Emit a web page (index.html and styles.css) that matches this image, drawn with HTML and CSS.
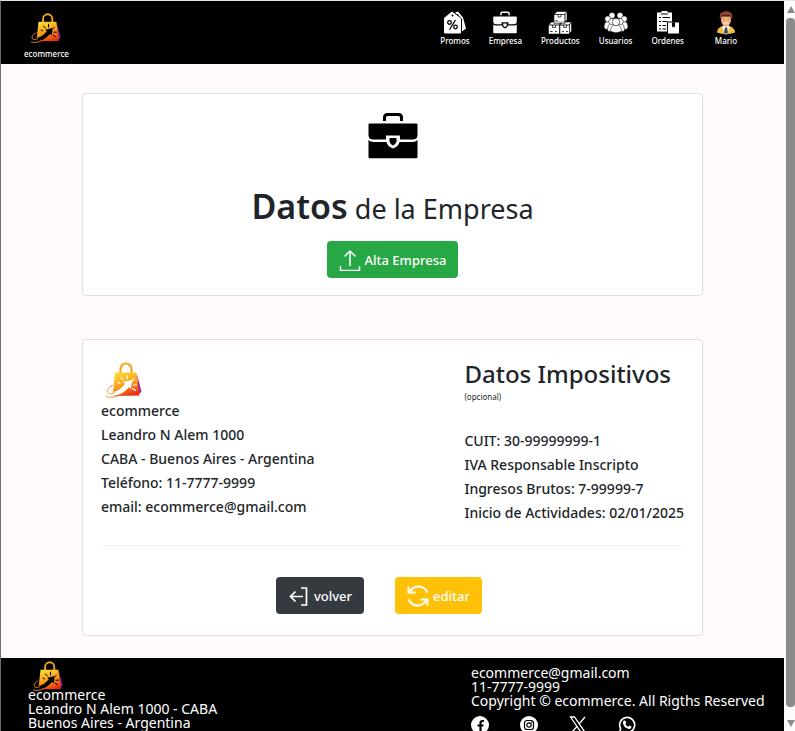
FILE: index.html
```html
<!DOCTYPE html>
<html lang="es">
<head>
<meta charset="utf-8">
<meta name="viewport" content="width=device-width, initial-scale=1">
<title>ecommerce - Empresa</title>
<link rel="stylesheet" href="styles.css">
</head>
<body>
<svg class="defs" aria-hidden="true">
  <defs>
    <linearGradient id="bag-fill" x1="0.3" y1="0" x2="0.7" y2="1">
      <stop offset="0" stop-color="#fdd835"/>
      <stop offset="0.5" stop-color="#f9a01b"/>
      <stop offset="1" stop-color="#e62a10"/>
    </linearGradient>
    <linearGradient id="swoosh-fill" x1="0" y1="1" x2="1" y2="0">
      <stop offset="0" stop-color="#f9b233"/>
      <stop offset="1" stop-color="#e8431a"/>
    </linearGradient>
    <symbol id="bag" viewBox="0 0 38 36">
      <path d="M32 12l4.500 18-3 2z" fill="#a3238e"/>
      <path d="M15.500 12V7a5.500 5.500 0 0 1 11 0v5" fill="none" stroke="#f3a61f" stroke-width="2.200"/>
      <path d="M10 10.500h21.500L34.500 33.500 7.500 34z" fill="url(#bag-fill)"/>
      <path d="M3 33c9 3 17-3 21-8l2 2 1-9-9 2 2 2c-4 5-9 8-13 8-3 0-3-3-1-6-5 3-7 7-3 9z" fill="currentColor"/>
      <path d="M7.500 23.500c-5 2-6.500 6.500-4 8 2 1 4 0 6-1" fill="none" stroke="url(#swoosh-fill)" stroke-width="1"/>
      <path d="M1 34.500c4 1.500 9 1 13-1.500" fill="none" stroke="url(#swoosh-fill)" stroke-width="1"/>
      <path d="M22 13.500v3.500M16 15.500l2 2.500M29 17l-2.500 2.500M28.500 23h3M27.500 26.500l3 2M15 21.500l-2-1" stroke="currentColor" stroke-width="1.200" stroke-linecap="round"/>
    </symbol>
    <symbol id="briefcase" viewBox="0 0 50 46">
      <path d="M16.500 8V4.500q0-3 3-3h11q3 0 3 3V8" fill="none" stroke="currentColor" stroke-width="3"/>
      <path d="M1.500 10.500h47a1 1 0 0 1 1 1V22q0 4.500-5 4.500H32V22.500H18v4H5.500q-5 0-5-4.500V11.500a1 1 0 0 1 1-1z" fill="currentColor"/>
      <path d="M.500 27q2 2 5 2H18.500q1 4.500 6.500 6.500 5.500-2 6.500-6.500h13q3 0 5-2V44a1.300 1.300 0 0 1-1.300 1.300H1.800A1.300 1.300 0 0 1 .500 44z" fill="currentColor"/>
      <path d="M21.500 25h7v3.500q-.500 2.500-3.500 4-3-1.500-3.500-4z" fill="currentColor"/>
    </symbol>
  </defs>
</svg>
<div class="window">
  <div class="page">
    <header class="topbar">
      <a class="nav-item brand" href="#"><svg class="bag-small"><use href="#bag"/></svg><span>ecommerce</span></a>
      <nav class="nav">
        <a class="nav-item" href="#">
          <svg class="nav-icon" viewBox="0 0 24 24"><path d="M12 2l3-1 5 6 3 11-4 3V9z" fill="#fff"/><path d="M14 3.500l4.500 5V20" fill="none" stroke="#000"/><path d="M9 1L1 7.500V22q0 1 1 1h15q1 0 1-1V8z" fill="#fff"/><circle cx="9.500" cy="5" r="1"/><path d="M12.500 9.500l-6 9.500" stroke="#000" stroke-width="1.300"/><circle cx="6.500" cy="12" r="1.800" fill="none" stroke="#000" stroke-width="1.300"/><circle cx="12.500" cy="16.500" r="1.800" fill="none" stroke="#000" stroke-width="1.300"/></svg>
          <span>Promos</span>
        </a>
        <a class="nav-item" href="#"><svg class="nav-icon"><use href="#briefcase"/></svg><span>Empresa</span></a>
        <a class="nav-item" href="#">
          <svg class="nav-icon" viewBox="0 0 24 24"><g fill="#fff" stroke="#000" stroke-width=".5"><path d="M6 4l3-3h10l-2 3zM17 4l2-3v8l-2 3zM6 4h11v9H6zM.500 14.500l3-3h9l-1 3zM.500 14.500h11v9H.500zM12 14.500l2-3h9.500l-2 3zM21.500 14.500l2-3v9l-2 3zM12 14.500h9.500v9H12z"/></g><path d="M10 4v2.500h3V4M4.500 14.500V17h3v-2.500M15.500 14.500V17h3v-2.500M7.500 10h2M2 21h2.500M7 21h2M14 21h2M18 21h2" fill="none" stroke="#000" stroke-width=".7"/></svg>
          <span>Productos</span>
        </a>
        <a class="nav-item" href="#">
          <svg class="nav-icon" viewBox="0 0 24 24"><g fill="#fff" stroke="#000" stroke-width=".5"><circle cx="8" cy="5" r="3"/><circle cx="16" cy="5" r="3"/><path d="M0 17q0-6 4-6t4 6v2H2zM24 17q0-6-4-6t-4 6v2h6z"/><circle cx="3.800" cy="8.500" r="3"/><circle cx="20.200" cy="8.500" r="3"/><path d="M3.500 20q0-7 4.500-7t4 7v1H5zM20.500 20q0-7-4.500-7t-4 7v1h7z"/><circle cx="7.800" cy="11" r="3"/><circle cx="16.200" cy="11" r="3"/><path d="M6.500 20.500q0-6 5.500-6t5.500 6q-5.500 3.500-11 0z"/><circle cx="12" cy="11.500" r="3.700"/></g></svg>
          <span>Usuarios</span>
        </a>
        <a class="nav-item" href="#">
          <svg class="nav-icon" viewBox="0 0 24 24"><path d="M1 2h4l1-1.500h5L12 2h4v9h-5v10H1z" fill="#fff"/><path d="M5 3.500h7M3 7h2M6.500 7H14M3 11h2M6.500 11H11M3 15h2M6.500 15H10M3 18.500h2M6.500 18.500H10" stroke="#000" stroke-width="1"/><path d="M12 12h11v11H12z" fill="#fff"/><path d="M16 12h3v5l-1.500-1-1.500 1z"/></svg>
          <span>Ordenes</span>
        </a>
        <a class="nav-item user" href="#">
          <svg class="nav-icon" viewBox="0 0 24 24"><path d="M3 22q0-5 6-6.500h6q6 1.500 6 6.500-9 3-18 0z" fill="#f6bd42"/><path d="M8 16l4-2 4 2-3 8h-2z" fill="#f2f4f7"/><path d="M11 17h2l1 5-2 1.500-2-1.500z" fill="#394b63"/><path d="M6.800 6h10.400q0 10-5.200 10T6.800 6z" fill="#f7b380"/><path d="M6 8q-1-5 1.500-6Q13-1 16.500 2 19 3 18 8l-1.500 1-.500-4H8l-.500 4z" fill="#8f3f32"/><path d="M10 12q2 1.500 4 0" fill="none" stroke="#fff"/><circle cx="9.800" cy="8.500" r=".6" fill="#5a302c"/><circle cx="14.200" cy="8.500" r=".6" fill="#5a302c"/></svg>
          <span>Mario</span>
        </a>
      </nav>
    </header>

    <main class="content">
      <section class="card hero">
        <svg class="hero-icon"><use href="#briefcase"/></svg>
        <h1 class="title"><strong>Datos</strong> de la Empresa</h1>
        <button class="btn btn-success" type="button">
          <svg class="btn-icon" viewBox="0 0 22 22"><path d="M1.500 17v4.500h19V17M11 17V2.500M5.500 7.500L11 2 16.500 7.500" fill="none" stroke="currentColor" stroke-width="1.500"/></svg>
          Alta Empresa
        </button>
      </section>

      <section class="card details">
        <div class="columns">
          <div class="info">
            <svg class="bag-large"><use href="#bag"/></svg>
            <p>ecommerce</p>
            <p>Leandro N Alem 1000</p>
            <p>CABA - Buenos Aires - Argentina</p>
            <p>Teléfono: 11-7777-9999</p>
            <p>email: ecommerce@gmail.com</p>
          </div>
          <div class="info tax">
            <h2>Datos Impositivos</h2>
            <small>(opcional)</small>
            <p>CUIT: 30-99999999-1</p>
            <p>IVA Responsable Inscripto</p>
            <p>Ingresos Brutos: 7-99999-7</p>
            <p>Inicio de Actividades: 02/01/2025</p>
          </div>
        </div>
        <hr>
        <div class="actions">
          <button class="btn btn-dark" type="button">
            <svg class="btn-icon" viewBox="0 0 22 22"><path d="M13 3h5.500v17H13M15 11.500H3M7.500 6.500L2.500 11.500l5 5" fill="none" stroke="currentColor" stroke-width="1.700"/></svg>
            volver
          </button>
          <button class="btn btn-warning" type="button">
            <svg class="btn-icon" viewBox="0 0 22 22"><path d="M3 6.500Q6 1.500 11.500 1.500q6 0 9 6M19 15.500q-3 5-8.500 5-6 0-9-6" fill="none" stroke="currentColor" stroke-width="2"/><path d="M1.500 1.500v6h7M20.500 20.500v-6h-7" fill="none" stroke="currentColor" stroke-width="2"/></svg>
            editar
          </button>
        </div>
      </section>
    </main>

    <footer class="footer">
      <div class="footer-address">
        <svg class="bag-small"><use href="#bag"/></svg>
        <p>ecommerce</p>
        <p>Leandro N Alem 1000 - CABA</p>
        <p>Buenos Aires - Argentina</p>
      </div>
      <div class="footer-contact">
        <p>ecommerce@gmail.com</p>
        <p>11-7777-9999</p>
        <p>Copyright © ecommerce. All Rigths Reserved</p>
        <div class="social">
          <a href="#" aria-label="Facebook"><svg viewBox="0 0 18 18"><circle cx="9" cy="9" r="9" fill="#fff"/><path d="M13 5h-1.500q-2 0-2 2v11M6.500 9.500h6" fill="none" stroke="#000" stroke-width="2.200"/></svg></a>
          <a href="#" aria-label="Instagram"><svg viewBox="0 0 18 18"><circle cx="9" cy="9" r="9" fill="#fff"/><rect x="4.500" y="4.500" width="9" height="9" rx="2.500" fill="none" stroke="#000" stroke-width="1.200"/><circle cx="9" cy="9" r="2.200" fill="none" stroke="#000" stroke-width="1.200"/><circle cx="11.700" cy="6.300" r=".7"/></svg></a>
          <a href="#" aria-label="X"><svg viewBox="0 0 18 18"><path d="M1.500 1h4l11 16h-4zM16 1L10 8M8 10.500L2 17" fill="none" stroke="#fff" stroke-width="1.300"/></svg></a>
          <a href="#" aria-label="WhatsApp"><svg viewBox="0 0 18 18"><path d="M1.500 16.500l1.100-4A7.500 7.500 0 1 1 5.600 15.500z" fill="none" stroke="#fff" stroke-width="1.600"/><path d="M6 4.500l1.500.200.700 2-.900 1.200q1 2 2.900 2.800l1.200-1.200 2 1q0 2.500-2.500 2.500Q6 12 4.800 7q0-1.700 1.200-2.500z" fill="#fff"/></svg></a>
        </div>
      </div>
    </footer>
  </div>
  <div class="scrollbar" aria-hidden="true">
    <span class="arrow-up"></span>
    <span class="thumb"></span>
    <span class="arrow-down"></span>
  </div>
</div>
</body>
</html>
```
FILE: styles.css
```css
* {
  box-sizing: border-box;
}

body {
  margin: 0;
  font-family: "Noto Sans", "Open Sans", sans-serif;
  font-size: 13px;
  color: #212529;
  background: #fffaf9;
}

h1, h2, p {
  margin: 0;
}

svg {
  display: block;
}

.defs {
  position: absolute;
  width: 0;
  height: 0;
}

.window {
  display: flex;
  height: 100vh;
  overflow: hidden;
  border-top: 1px solid #dfe5ee;
  border-left: 1px solid #6b6b6b;
}

.page {
  flex: 1;
  min-width: 0;
  overflow: hidden;
}

.topbar {
  display: flex;
  justify-content: space-between;
  align-items: flex-start;
  padding: 9px 46px 4px 23px;
  background: #000;
}

.nav {
  display: flex;
  gap: 19px;
}

.nav-item {
  display: flex;
  flex-direction: column;
  align-items: center;
  font-size: 8px;
  font-weight: 500;
  line-height: 12px;
  color: #fff;
  text-decoration: none;
}

.nav-icon {
  width: 24px;
  height: 25px;
}

.brand {
  gap: 5px;
  padding-top: 3px;
}

.user {
  margin-left: 11px;
}

.bag-small {
  width: 32px;
  height: 30px;
  color: #000;
}

.bag-large {
  width: 38px;
  height: 36px;
  margin: 2px 0 1px 4px;
  color: #fff;
}

.content {
  display: flex;
  flex-direction: column;
  gap: 43px;
  padding: 29px 81px 22px;
}

.card {
  background: #fff;
  border: 1px solid #dfdfdf;
  border-radius: 4px;
}

.hero {
  display: flex;
  flex-direction: column;
  align-items: center;
  padding: 19px 18px 17px;
}

.hero-icon {
  width: 50px;
  height: 46px;
  color: #000;
}

.title {
  margin: 23px 0 8px;
  font-size: 27px;
  font-weight: 400;
  line-height: 48px;
}

.title strong {
  font-size: 34px;
  font-weight: 600;
}

.btn {
  display: flex;
  align-items: center;
  gap: 4px;
  height: 37px;
  padding: 0 12px;
  border: 0;
  border-radius: 4px;
  font: inherit;
  font-weight: 500;
  color: #fff;
}

.btn-icon {
  width: 22px;
  height: 22px;
}

.btn-success {
  background: #28a745;
}

.btn-dark {
  background: #343a40;
}

.btn-warning {
  background: #ffc107;
}

.details {
  padding: 20px 18px 21px;
}

.columns {
  display: flex;
  justify-content: space-between;
}

.info p {
  font-size: 14px;
  font-weight: 500;
  line-height: 24px;
}

.tax h2 {
  font-size: 24px;
  font-weight: 500;
  line-height: 28px;
}

.tax small {
  display: block;
  margin: 3px 0 26px;
  font-size: 8px;
  line-height: 12px;
}

hr {
  height: 1px;
  margin: 20px 0 31px;
  border: 0;
  background: #f1f1f1;
}

.actions {
  display: flex;
  justify-content: center;
  gap: 31px;
  padding-right: 27px;
}

.footer {
  display: grid;
  grid-template-columns: 443px 1fr;
  padding: 3px 0 12px 27px;
  font-size: 14px;
  line-height: 14px;
  color: #fff;
  background: #000;
}

.footer-address .bag-small {
  margin: 0 0 -3px 4px;
}

.footer-contact {
  padding-top: 5px;
}

.social {
  display: flex;
  gap: 31px;
  margin-top: 8px;
}

.social svg {
  width: 18px;
  height: 18px;
}

.scrollbar {
  display: flex;
  flex-direction: column;
  align-items: center;
  gap: 5px;
  width: 11px;
  padding: 5px 0 4px 2px;
  background: #fcfcfc;
}

.thumb {
  flex: 1;
  width: 9px;
  border-radius: 4px;
  background: #8b8b8b;
}

.arrow-up,
.arrow-down {
  border: 4px solid transparent;
}

.arrow-up {
  border-top: 0;
  border-bottom: 7px solid #8b8b8b;
}

.arrow-down {
  margin-top: 8px;
  border-bottom: 0;
  border-top: 7px solid #8b8b8b;
}
```
